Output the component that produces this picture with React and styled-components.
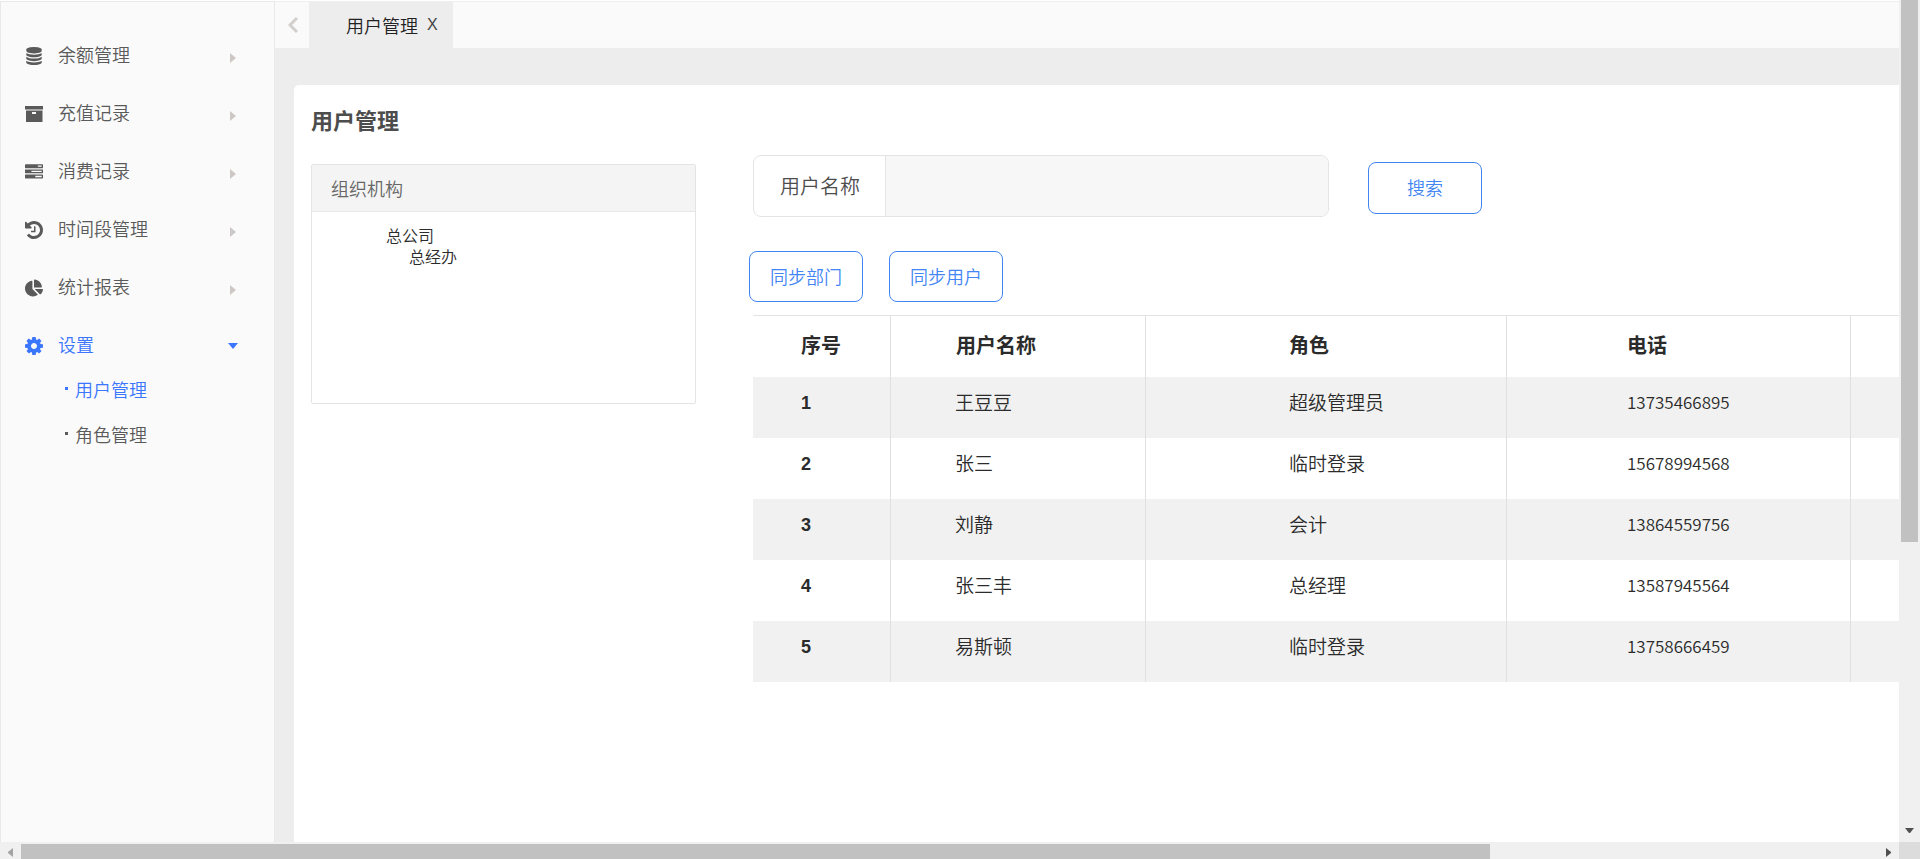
import React from "react";
import styled, { createGlobalStyle } from "styled-components";
import { FaChartPie } from "react-icons/fa";

const GlobalStyle = createGlobalStyle`
  *, *::before, *::after { box-sizing: border-box; }
  body {
    margin: 0;
    overflow: hidden;
    font-family: "Noto Sans CJK SC", "Liberation Sans", sans-serif;
    font-size: 18px;
    font-weight: 350;
    color: #2b2b2b;
    background: #fff;
  }
  button, input { font: inherit; }
`;

const Window = styled.div`
  display: grid;
  grid-template: minmax(0, 1fr) 17px / minmax(0, 1fr) 21px;
  height: 100vh;
`;

const Page = styled.div`
  display: flex;
  min-width: 0;
  overflow: hidden;
  border-top: 1px solid #fff;
`;

const Sidebar = styled.nav`
  flex: 0 0 275px;
  padding: 32px 0 0;
  background: #fafafa;
  border: 1px solid #e9e9e9;
  border-bottom: 0;
`;

const MenuList = styled.ul`
  display: flex;
  flex-direction: column;
  gap: 14px;
  margin: 0;
  padding: 0;
  list-style: none;
`;

const MenuItem = styled.button`
  display: flex;
  align-items: center;
  width: 100%;
  height: 44px;
  padding: 0 36px 0 24px;
  border: 0;
  background: none;
  color: ${(p) => (p.$active ? "#3b76ff" : "#5a5a5a")};
  text-align: left;
  cursor: pointer;
`;

const MenuIcon = styled.svg.attrs({ "aria-hidden": true })`
  width: 18px;
  height: 18px;
  flex: none;
  fill: currentColor;
`;

const MenuLabel = styled.span`
  flex: 1;
  padding: 0 0 4px 15px;
`;

const Caret = styled.svg.attrs({ "aria-hidden": true, viewBox: "0 0 10 10" })`
  width: 10px;
  height: 10px;
  margin-top: ${(p) => (p.$open ? 0 : 4)}px;
  fill: ${(p) => (p.$open ? "#3b76ff" : "#cdc8c6")};
`;

const SubList = styled.ul`
  margin: 0;
  padding: 0;
  list-style: none;
`;

const SubLink = styled.a`
  display: flex;
  align-items: center;
  gap: 7px;
  height: 45px;
  padding: 0 0 4px 64px;
  color: ${(p) => (p.$active ? "#3b76ff" : "#5a5a5a")};
  text-decoration: none;

  &::before {
    content: "";
    width: 3px;
    height: 3px;
    background: currentColor;
  }
`;

const Main = styled.main`
  display: flex;
  flex: 1;
  flex-direction: column;
  min-width: 0;
  background: #ededed;
`;

const TabBar = styled.div`
  display: flex;
  height: 47px;
  border-top: 1px solid #efefef;
  background: #fafafa;
`;

const ScrollTabs = styled.button`
  display: flex;
  align-items: center;
  justify-content: center;
  width: 34px;
  padding: 0 0 0 2px;
  border: 0;
  background: none;
`;

const Tab = styled.div`
  display: flex;
  align-items: center;
  gap: 9px;
  width: 144px;
  padding: 0 0 0 37px;
  background: #ededed;
  color: #222;
  white-space: nowrap;
`;

const TabClose = styled.button`
  padding: 0;
  border: 0;
  background: none;
  color: #444;
  font-family: "Liberation Sans", sans-serif;
  font-size: 16px;
`;

const Card = styled.section`
  flex: 1;
  margin: 37px 0 0 19px;
  padding: 16px 0 0 17px;
  border-radius: 5px 0 0 0;
  background: #fff;
`;

const Title = styled.h1`
  margin: 0;
  font-size: 22px;
  font-weight: 700;
  line-height: 36px;
  color: #4d4d4d;
`;

const Columns = styled.div`
  display: flex;
  align-items: flex-start;
  gap: 57px;
`;

const OrgPanel = styled.section`
  flex: 0 0 385px;
  height: 240px;
  margin-top: 27px;
  border: 1px solid #e3e5e5;
  border-radius: 2px;
`;

const OrgHeader = styled.h2`
  margin: 0;
  padding: 0 19px;
  border-bottom: 1px solid #e6e8e8;
  background: #f4f4f4;
  color: #666;
  font-size: 18px;
  font-weight: inherit;
  line-height: 46px;
`;

const Tree = styled.ul`
  margin: 0;
  padding: 0 0 0 23px;
  list-style: none;
  font-size: 16px;
  line-height: 21px;
`;

const OrgBody = styled.div`
  padding: 13px 0 0 51px;
`;

const Users = styled.div`
  flex: 1;
  min-width: 0;
  padding-top: 18px;
`;

const SearchForm = styled.form`
  display: flex;
  align-items: center;
  gap: 39px;
`;

const Field = styled.div`
  display: flex;
  flex: 0 1 576px;
  height: 62px;
  overflow: hidden;
  border: 1px solid #e4e4e4;
  border-radius: 8px;
`;

const FieldLabel = styled.label`
  display: flex;
  flex: none;
  align-items: center;
  width: 132px;
  padding: 0 0 2px 26px;
  border-right: 1px solid #e4e4e4;
  color: #4d4d4d;
  font-size: 20px;
`;

const FieldInput = styled.input`
  flex: 1;
  min-width: 0;
  padding: 0 16px;
  border: 0;
  outline: 0;
  background: #f7f7f7;
`;

const OutlineButton = styled.button`
  width: 114px;
  height: 51px;
  padding: 0 0 2px;
  border: 1px solid #4285f4;
  border-radius: 8px;
  background: #fff;
  color: #4285f4;
  cursor: pointer;
`;

const SearchButton = styled(OutlineButton)`
  height: 52px;
  margin-top: 4px;
`;

const Actions = styled.div`
  display: flex;
  gap: 26px;
  margin: 34px 0 13px -4px;
`;

const Table = styled.table`
  width: 100%;
  table-layout: fixed;
  border-collapse: separate;
  border-spacing: 0;
  border-top: 1px solid #e4e4e4;
`;

const Col = styled.col`
  width: ${(p) => p.$width};
`;

const Row = styled.tr`
  height: 61px;

  tbody &:nth-child(odd) { background: #f1f1f1; }
  > :not(:last-child) { border-right: 1px solid #e0e0e0; }
`;

const HeadCell = styled.th`
  padding: 0 0 4px ${(p) => p.$indent}px;
  font-size: 20px;
  font-weight: 700;
  line-height: 24px;
  text-align: left;
`;

const RowNumber = styled.th`
  padding: 0 0 10px 48px;
  font-family: "Liberation Sans", sans-serif;
  font-size: 18px;
  font-weight: 700;
  line-height: 24px;
  text-align: left;
`;

const Cell = styled.td`
  padding: 0 0 12px ${(p) => p.$indent}px;
  font-size: ${(p) => (p.$numeric ? 17 : 19)}px;
  line-height: 24px;
`;

const Track = styled.div`
  display: flex;
  flex-direction: ${(p) => (p.$vertical ? "column" : "row")};
  padding: ${(p) => (p.$vertical ? "0 2px" : "2px 0 0")};
  background: #f0f0f0;
`;

const Thumb = styled.div`
  flex: ${(p) => p.$share};
  background: #c1c1c1;
`;

const Rest = styled.div`
  flex: ${(p) => p.$share};
`;

const TrackArrow = styled.svg.attrs({ "aria-hidden": true })`
  flex: none;
  width: ${(p) => p.$w}px;
  height: ${(p) => p.$h}px;
`;

const Corner = styled.div`
  background: #dcdcdc;
`;

const ICONS = {
  database: (
    <MenuIcon viewBox="-128 0 1792 1792">
      <path d="M768 768q237 0 443-43t325-127v170q0 69-103 128t-280 93.500-385 34.500-385-34.500-280-93.500-103-128v-170q119 84 325 127t443 43zm0 768q237 0 443-43t325-127v170q0 69-103 128t-280 93.500-385 34.500-385-34.500-280-93.500-103-128v-170q119 84 325 127t443 43zm0-384q237 0 443-43t325-127v170q0 69-103 128t-280 93.500-385 34.500-385-34.500-280-93.500-103-128v-170q119 84 325 127t443 43zm0-1152q208 0 385 34.500t280 93.500 103 128v128q0 69-103 128t-280 93.500-385 34.500-385-34.500-280-93.500-103-128v-128q0-69 103-128t280-93.500 385-34.500z" />
    </MenuIcon>
  ),
  archive: (
    <MenuIcon viewBox="0 0 18 18">
      <path d="M0 1h18v3.500H0zM1 5.500h16.500v11.500H1zM7 7v2h4V7z" fillRule="evenodd" />
    </MenuIcon>
  ),
  tasks: (
    <MenuIcon viewBox="0 0 1792 1792">
      <path d="M1024 1408h640v-128h-640v128zm-384-512h1024v-128h-1024v128zm640-512h384v-128h-384v128zm512 832v256q0 26-19 45t-45 19h-1664q-26 0-45-19t-19-45v-256q0-26 19-45t45-19h1664q26 0 45 19t19 45zm0-512v256q0 26-19 45t-45 19h-1664q-26 0-45-19t-19-45v-256q0-26 19-45t45-19h1664q26 0 45 19t19 45zm0-512v256q0 26-19 45t-45 19h-1664q-26 0-45-19t-19-45v-256q0-26 19-45t45-19h1664q26 0 45 19t19 45z" />
    </MenuIcon>
  ),
  history: (
    <MenuIcon viewBox="128 128 1536 1536">
      <path d="M1664 896q0 156-61 298t-164 245-245 164-298 61q-172 0-327-72.500t-264-204.500q-7-10-6.500-22.500t8.500-20.500l137-138q10-9 25-9 16 2 23 12 73 95 179 147t225 52q104 0 198.500-40.500t163.500-109.500 109.500-163.500 40.500-198.500-40.500-198.500-109.500-163.500-163.500-109.500-198.500-40.500q-98 0-188 35.500t-160 101.500l137 138q31 30 14 69-17 40-59 40h-448q-26 0-45-19t-19-45v-448q0-42 40-59 39-17 69 14l130 129q107-101 244.500-156.500t284.500-55.500q156 0 298 61t245 164 164 245 61 298zm-640-288v448q0 14-9 23t-23 9h-320q-14 0-23-9t-9-23v-64q0-14 9-23t23-9h224v-352q0-14 9-23t23-9h64q14 0 23 9t9 23z" />
    </MenuIcon>
  ),
  pie: <MenuIcon as={FaChartPie} />,
  cog: (
    <MenuIcon viewBox="128 128 1536 1536">
      <path d="M1152 896q0-106-75-181t-181-75-181 75-75 181 75 181 181 75 181-75 75-181zm512-109v222q0 12-8 23t-20 13l-185 28q-19 54-39 91 35 50 107 138 10 12 10 25t-9 23q-27 37-99 108t-94 71q-12 0-26-9l-138-108q-44 23-91 38-16 136-29 186-7 28-36 28h-222q-14 0-24.500-8.500t-11.500-21.500l-28-184q-49-16-90-37l-141 107q-10 9-25 9-14 0-25-11-126-114-165-168-7-10-7-23 0-12 8-23 15-21 51-66.500t54-70.500q-27-50-41-99l-183-27q-13-2-21-12.500t-8-23.500v-222q0-12 8-23t19-13l186-28q14-46 39-92-40-57-107-138-10-12-10-24 0-10 9-23 26-36 98.500-107.500t94.500-71.500q13 0 26 10l138 107q44-23 91-38 16-136 29-186 7-28 36-28h222q14 0 24.500 8.500t11.500 21.500l28 184q49 16 90 37l142-107q9-9 24-9 13 0 25 10 129 119 165 170 7 8 7 22 0 12-8 23-15 21-51 66.500t-54 70.500q26 50 41 98l183 28q13 2 21 12.500t8 23.500z" />
    </MenuIcon>
  ),
};

const MENU = [
  { label: "余额管理", icon: "database" },
  { label: "充值记录", icon: "archive" },
  { label: "消费记录", icon: "tasks" },
  { label: "时间段管理", icon: "history" },
  { label: "统计报表", icon: "pie" },
  { label: "设置", icon: "cog", open: true },
];

const USERS = [
  { name: "王豆豆", role: "超级管理员", phone: "13735466895" },
  { name: "张三", role: "临时登录", phone: "15678994568" },
  { name: "刘静", role: "会计", phone: "13864559756" },
  { name: "张三丰", role: "总经理", phone: "13587945564" },
  { name: "易斯顿", role: "临时登录", phone: "13758666459" },
];

export default function App() {
  return (
    <>
      <GlobalStyle />
      <Window>
        <Page>
          <Sidebar>
            <MenuList>
              {MENU.map(({ label, icon, open }) => (
                <li key={label}>
                  <MenuItem type="button" $active={open} aria-expanded={!!open}>
                    {ICONS[icon]}
                    <MenuLabel>{label}</MenuLabel>
                    <Caret $open={open}>
                      <path d={open ? "M0 2h10L5 8z" : "M2 0l6 5-6 5z"} />
                    </Caret>
                  </MenuItem>
                  {open && (
                    <SubList>
                      <li><SubLink href="#users" $active>用户管理</SubLink></li>
                      <li><SubLink href="#roles">角色管理</SubLink></li>
                    </SubList>
                  )}
                </li>
              ))}
            </MenuList>
          </Sidebar>
          <Main>
            <TabBar>
              <ScrollTabs type="button" aria-label="向左">
                <svg width="10" height="16" viewBox="0 0 10 16" fill="none" stroke="#d3cfcd" strokeWidth="3">
                  <path d="M9 1L2 8l7 7" />
                </svg>
              </ScrollTabs>
              <Tab>
                <span>用户管理</span>
                <TabClose type="button">X</TabClose>
              </Tab>
            </TabBar>
            <Card>
              <Title>用户管理</Title>
              <Columns>
                <OrgPanel>
                  <OrgHeader>组织机构</OrgHeader>
                  <OrgBody>
                    <Tree>
                      <li>
                        总公司
                        <Tree>
                          <li>总经办</li>
                        </Tree>
                      </li>
                    </Tree>
                  </OrgBody>
                </OrgPanel>
                <Users>
                  <SearchForm onSubmit={(e) => e.preventDefault()}>
                    <Field>
                      <FieldLabel htmlFor="user-name">用户名称</FieldLabel>
                      <FieldInput id="user-name" type="text" />
                    </Field>
                    <SearchButton type="submit">搜索</SearchButton>
                  </SearchForm>
                  <Actions>
                    <OutlineButton type="button">同步部门</OutlineButton>
                    <OutlineButton type="button">同步用户</OutlineButton>
                  </Actions>
                  <Table>
                    <colgroup>
                      <Col $width="138px" />
                      <Col $width="255px" />
                      <Col $width="361px" />
                      <Col $width="344px" />
                      <Col $width="auto" />
                    </colgroup>
                    <thead>
                      <Row>
                        <HeadCell scope="col" $indent={48}>序号</HeadCell>
                        <HeadCell scope="col" $indent={65}>用户名称</HeadCell>
                        <HeadCell scope="col" $indent={143}>角色</HeadCell>
                        <HeadCell scope="col" $indent={120}>电话</HeadCell>
                        <HeadCell as="td" $indent={0} />
                      </Row>
                    </thead>
                    <tbody>
                      {USERS.map((user, i) => (
                        <Row key={user.phone}>
                          <RowNumber scope="row">{i + 1}</RowNumber>
                          <Cell $indent={64}>{user.name}</Cell>
                          <Cell $indent={143}>{user.role}</Cell>
                          <Cell $indent={120} $numeric>{user.phone}</Cell>
                          <Cell $indent={0} />
                        </Row>
                      ))}
                    </tbody>
                  </Table>
                </Users>
              </Columns>
            </Card>
          </Main>
        </Page>
        <Track $vertical>
          <Thumb $share={66} />
          <Rest $share={34} />
          <TrackArrow $w={17} $h={21} viewBox="0 0 17 21">
            <path d="M4 7h9l-4 5h-1z" fill="#505050" />
          </TrackArrow>
        </Track>
        <Track>
          <TrackArrow $w={21} $h={15} viewBox="0 0 21 15">
            <path d="M13 4v9L8 9V8z" fill="#a3a3a3" />
          </TrackArrow>
          <Thumb $share={791} />
          <Rest $share={209} />
          <TrackArrow $w={21} $h={15} viewBox="0 0 21 15">
            <path d="M8 4v9l5-4V8z" fill="#505050" />
          </TrackArrow>
        </Track>
        <Corner />
      </Window>
    </>
  );
}
